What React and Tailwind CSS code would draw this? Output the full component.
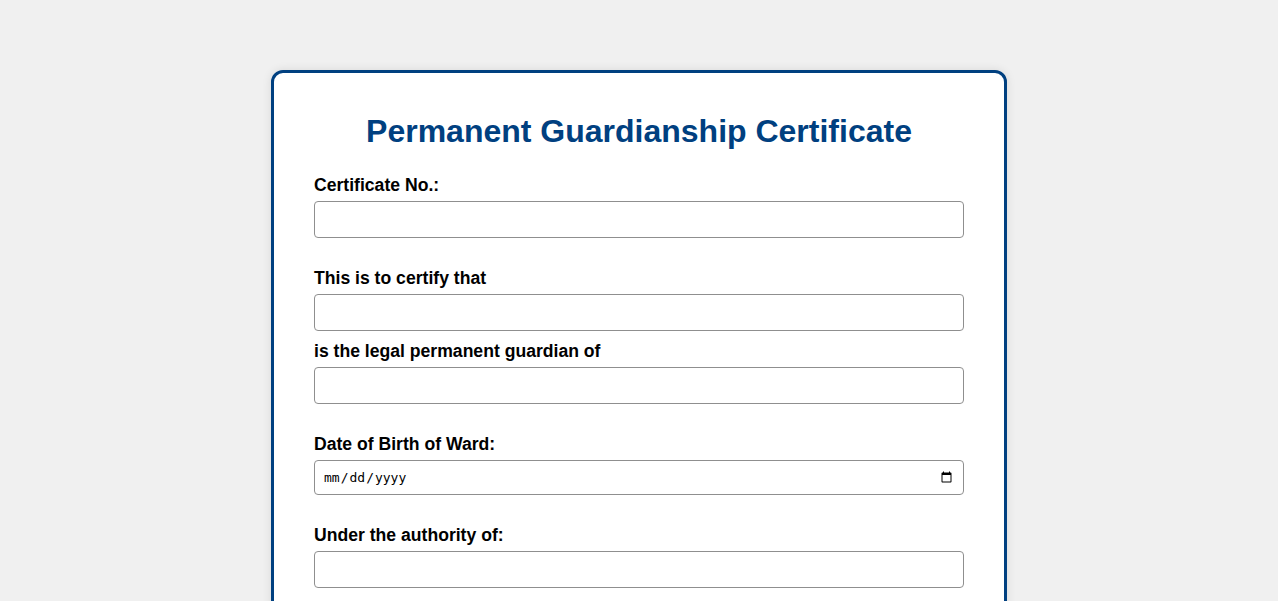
export default function App() {
  const label = "block text-[17.6px] leading-[20px] font-bold text-black mb-[6px]";
  const input = "block w-full h-[37px] border border-[#8f8f8f] rounded-[4px] bg-white px-[10px] text-[16px] outline-none";
  return (
    <div className="min-h-screen bg-[#f0f0f0] pt-[70px]" style={{ fontFamily: '"Liberation Sans", Arial, sans-serif' }}>
      <div className="mx-auto w-[736px] bg-white border-[3px] border-[#004080] rounded-[12px] px-[40px] pt-[40px] pb-[40px] shadow-[0_0_10px_rgba(0,0,0,0.1)]">
        <h1 className="text-[32px] leading-[37px] font-bold text-[#004080] text-center mb-[25px]">
          Permanent Guardianship Certificate
        </h1>
        <div className="mb-[30px]">
          <label className={label}>Certificate No.:</label>
          <input type="text" className={input} />
        </div>
        <div className="mb-[30px]">
          <label className={label}>This is to certify that</label>
          <input type="text" className={input} />
          <label className="block text-[17.6px] leading-[20px] font-bold text-black mt-[10px] mb-[6px]">is the legal permanent guardian of</label>
          <input type="text" className={input} />
        </div>
        <div className="mb-[30px]">
          <label className={label}>Date of Birth of Ward:</label>
          <input type="date" className="block w-full h-[35px] border border-[#8f8f8f] rounded-[4px] bg-white px-[8px] text-[13px] outline-none" style={{ fontFamily: '"DejaVu Sans Mono", monospace' }} />
        </div>
        <div className="mb-[30px]">
          <label className={label}>Under the authority of:</label>
          <input type="text" className={input} />
        </div>
      </div>
    </div>
  );
}
